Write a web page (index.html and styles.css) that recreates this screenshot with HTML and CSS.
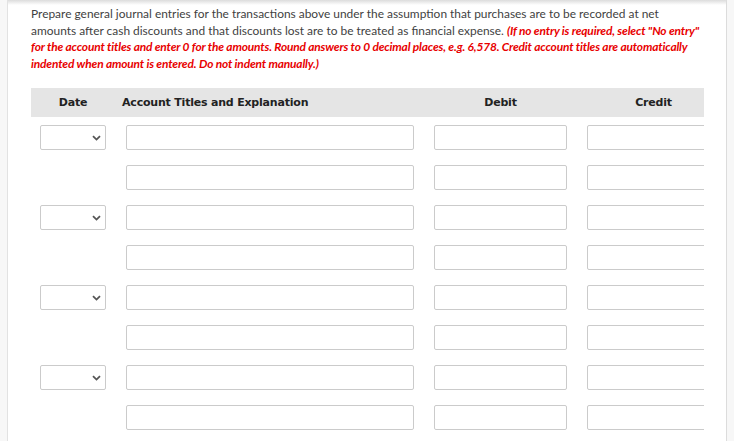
FILE: index.html
```html
<!DOCTYPE html>
<html>
<head>
<meta charset="utf-8">
<link rel="stylesheet" href="styles.css">
</head>
<body>
<div class="frame">
  <div class="side left"></div>
  <main class="main">
    <div class="shadow"></div>
    <p class="intro">Prepare general journal entries for the transactions above under the assumption that purchases are to be recorded at net<br>amounts after cash discounts and that discounts lost are to be treated as financial expense. <em class="note">(If no entry is required, select "No entry"<br>for the account titles and enter 0 for the amounts. Round answers to 0 decimal places, e.g. 6,578. Credit account titles are automatically<br>indented when amount is entered. Do not indent manually.)</em></p>
    <div class="table">
      <div class="head">
        <div class="grid">
          <span class="h-date">Date</span>
          <span class="h-acct">Account Titles and Explanation</span>
          <span class="h-num">Debit</span>
          <span class="h-num">Credit</span>
        </div>
      </div>
      <div class="rows">
        <div class="grid row"><div class="select"><svg width="9" height="6" viewBox="0 0 9 6"><path d="M1 1.2 L4.5 4.6 L8 1.2" fill="none" stroke="#555" stroke-width="1.8"/></svg></div><div class="input"></div><div class="input"></div><div class="input"></div></div>
        <div class="grid row"><div></div><div class="input"></div><div class="input"></div><div class="input"></div></div>
        <div class="grid row"><div class="select"><svg width="9" height="6" viewBox="0 0 9 6"><path d="M1 1.2 L4.5 4.6 L8 1.2" fill="none" stroke="#555" stroke-width="1.8"/></svg></div><div class="input"></div><div class="input"></div><div class="input"></div></div>
        <div class="grid row"><div></div><div class="input"></div><div class="input"></div><div class="input"></div></div>
        <div class="grid row"><div class="select"><svg width="9" height="6" viewBox="0 0 9 6"><path d="M1 1.2 L4.5 4.6 L8 1.2" fill="none" stroke="#555" stroke-width="1.8"/></svg></div><div class="input"></div><div class="input"></div><div class="input"></div></div>
        <div class="grid row"><div></div><div class="input"></div><div class="input"></div><div class="input"></div></div>
        <div class="grid row"><div class="select"><svg width="9" height="6" viewBox="0 0 9 6"><path d="M1 1.2 L4.5 4.6 L8 1.2" fill="none" stroke="#555" stroke-width="1.8"/></svg></div><div class="input"></div><div class="input"></div><div class="input"></div></div>
        <div class="grid row"><div></div><div class="input"></div><div class="input"></div><div class="input"></div></div>
      </div>
    </div>
  </main>
  <div class="side right"></div>
</div>
</body>
</html>
```
FILE: styles.css
```css
html, body {
  margin: 0;
  padding: 0;
  background: #fff;
  height: 100%;
  overflow: hidden;
}
.frame {
  display: flex;
  width: 734px;
  height: 441px;
}
.side {
  width: 7px;
  background: #f7f7f7;
  flex: none;
}
.side.left {
  border-right: 1px solid #e2e2e2;
}
.side.right {
  border-left: 1px solid #dcdcdc;
}
.main {
  flex: 1;
  position: relative;
  padding: 0 0 0 23px;
  overflow: hidden;
}
.shadow {
  position: absolute;
  left: 0;
  right: 0;
  top: 0;
  height: 5px;
  background: linear-gradient(#dcdcdc, rgba(255,255,255,0));
}
.intro {
  margin: 0;
  padding-top: 6px;
  width: 690px;
  white-space: nowrap;
  font-family: "Lato", sans-serif;
  font-size: 11.93px;
  line-height: 16.5px;
  color: #3f3f3f;
}
.note {
  color: #e80000;
  font-weight: bold;
  font-style: italic;
  letter-spacing: -0.16px;
}
.table {
  margin-top: 16px;
  width: 673px;
  overflow: hidden;
}
.head {
  background: #e5e5e5;
  height: 29px;
  display: flex;
  align-items: center;
  font-family: "DejaVu Sans", Verdana, sans-serif;
  font-weight: bold;
  font-size: 11px;
  letter-spacing: -0.2px;
  color: #222;
}
.grid {
  display: grid;
  grid-template-columns: 66px 288px 133px 133px;
  column-gap: 20px;
  padding-left: 9px;
}
.head .grid {
  width: 100%;
}
.h-date, .h-num {
  text-align: center;
}
.h-acct {
  margin-left: -4px;
}
.rows {
  padding-top: 8px;
  display: flex;
  flex-direction: column;
  gap: 15px;
}
.row {
  height: 25px;
}
.input, .select {
  box-sizing: border-box;
  height: 25px;
  border: 1px solid #cbcbcb;
  border-radius: 2px;
  background: #fff;
}
.select {
  display: flex;
  align-items: center;
  justify-content: flex-end;
  padding-right: 4px;
}
```
